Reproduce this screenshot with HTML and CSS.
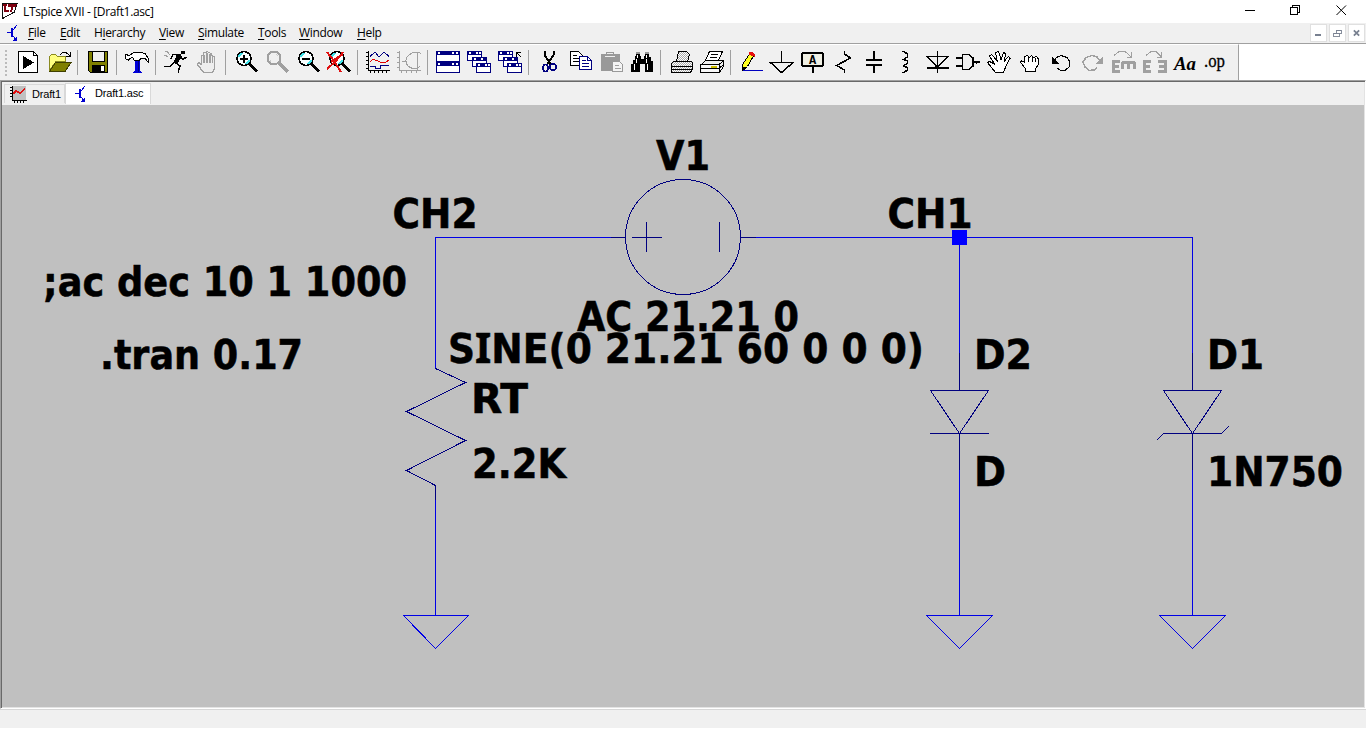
FILE: index.html
```html
<!DOCTYPE html>
<html lang="en">
<head>
<meta charset="utf-8">
<title>LTspice XVII - [Draft1.asc]</title>
<link rel="stylesheet" href="styles.css">
</head>
<body>
<div class="app">
  <header class="titlebar">
    <svg class="logo" width="20" height="23" viewBox="0 0 20 23"><path d="M2.500 3.500V18.500L14.500 12L17 3.500Z" fill="#fff" stroke="#111"/><path d="M3 4H7V6H6V10H9V12H4V6H3ZM8 4H17L16 7H13.500L12 12H10L11.500 7H8Z" fill="#800010"/></svg>
    <span class="title">LTspice XVII - [Draft1.asc]</span>
    <div class="caption">
      <svg width="46" height="23" viewBox="0 0 46 23"><path d="M17 10.500H27" class="k"/></svg>
      <svg width="46" height="23" viewBox="0 0 46 23"><path d="M16.500 7.500H23.500V14.500H16.500ZM18.500 7V5.500H25.500V12.500H24" class="k"/></svg>
      <svg width="46" height="23" viewBox="0 0 46 23"><path d="M16.500 5.500L26 15M26 5.500L16.500 15" class="k smooth"/></svg>
    </div>
  </header>
  <nav class="menubar">
    <svg class="bjt" width="18" height="20" viewBox="0 0 18 20"><use href="#bjt" x="5" y="1"/></svg>
    <span class="m-file"><u>F</u>ile</span><span class="m-edit"><u>E</u>dit</span><span class="m-hier">H<u>i</u>erarchy</span><span class="m-view"><u>V</u>iew</span><span class="m-sim"><u>S</u>imulate</span><span class="m-tools"><u>T</u>ools</span><span class="m-win"><u>W</u>indow</span><span class="m-help"><u>H</u>elp</span>
    <div class="mdi">
      <svg viewBox="0 0 17 17"><path d="M5 11H11" class="g2"/></svg>
      <svg viewBox="0 0 17 17"><path d="M4.500 8.500H10.500V12.500H4.500ZM7.500 8V5.500H12.500V9.500H11M4 8.500H11M7 5.500H13" class="g1"/></svg>
      <svg viewBox="0 0 17 17"><path d="M5.500 5.500L11.500 11.500M11.500 5.500L5.500 11.500" class="g2 smooth"/></svg>
    </div>
  </nav>
  <div class="toolbar">
    <i class="grip"></i>
    <svg viewBox="0 0 31 36"><path d="M6.500 7.500H21.500L25.500 11.500V28.500H6.500Z" class="w"/><path d="M21.500 7.500V11.500H25.500" class="k"/><path d="M11 12L22 18.500L11 25Z"/></svg>
    <svg viewBox="0 0 31 36"><path d="M6.500 26.500V12.500L8.500 10.500H12.500L14.500 12.500H22.500V17.500H13L6.500 26.500Z" fill="#ffff80" stroke="#8a8a20"/><path d="M6.500 27.500L12.500 18.500H28L22 27.500Z" fill="#808000" stroke="#404000"/><path d="M17 10.500L20 8.500H23L27.500 12.500M27.500 8V12.500H23" class="k"/></svg>
    <i class="sep"></i>
    <svg viewBox="0 0 31 36"><path d="M6.500 7.500H25.500V28.500H8.500L6.500 26.500Z" fill="#808000" stroke="#000"/><path d="M10 8H22V17H10Z" fill="#f0f0f0"/><path d="M10.500 8V17.500H22V8" class="k"/><path d="M10 21H23V28H10Z"/><path d="M19 22H22V27H19Z" fill="#fff"/></svg>
    <i class="sep"></i>
    <svg viewBox="0 0 31 36"><path d="M4.500 10.500L8.500 11.500L12.500 8.500H20.500L24.500 10L27.500 15V18.500L24 14.500H20L18 16.500H13.500L11.500 13.500L8.500 14.500L7.500 16.500L4.500 14.500Z" class="w"/><path d="M14 17H19V27L21 28V29H12V28L14 27Z" fill="#0000d8"/><path d="M17.500 17V28" stroke="#000080"/></svg>
    <i class="sep"></i>
    <svg viewBox="0 0 31 36"><path d="M21 7H25V10H21ZM16 10H21L22 13L17 20L13 19L16 13Z"/><path d="M20.500 12L23 15.500L26.500 13M17.500 10.500H13L10.500 15.500M14.500 18L10.500 22.500L4 22.500M16 19L20 22L18 28.500" class="k15"/><path d="M4.500 7.500H7L10 11M4 11.500H6L8.500 13.500" class="g"/></svg>
    <svg viewBox="0 0 31 36"><path d="M12.500 28.500L6.500 20.500L7.500 18.500L10.500 20.500V12L12.500 11.500V9L14.500 8.500L16 7.500L18 8.500L20 9.500L21.500 12L23.500 13V24L21.500 28.500ZM13 11V19M16 8.500V19M19 9.500V19M21.500 12V19" class="hd"/></svg>
    <i class="sep"></i>
    <svg viewBox="0 0 31 36"><use href="#lens"/><path d="M10 14.500H18M14 10.500V18.500" class="k2"/></svg>
    <svg viewBox="0 0 31 36"><circle cx="13" cy="14" r="6.500" fill="none" stroke="#a0a0a0" stroke-width="2"/><path d="M18.500 19.500L27 28" stroke="#a0a0a0" stroke-width="3"/><path d="M15 10L17 12M10 18L9 16" stroke="#ccc"/></svg>
    <svg viewBox="0 0 31 36"><use href="#lens"/><path d="M10 14.500H18" class="k2"/></svg>
    <svg viewBox="0 0 31 36"><use href="#lens"/><path d="M4 8L11 17L18 28M20 8L13 17L4 25M8 18L20 10" fill="none" stroke="#e01010" stroke-width="2"/></svg>
    <i class="sep"></i>
    <svg viewBox="0 0 31 36"><path d="M6.500 7V26.500H28M4 8.500H7M4 12.500H7M4 16.500H7M4 20.500H7M4 24.500H7M8.500 26V29M12.500 26V29M16.500 26V29M20.500 26V29M24.500 26V29" class="k"/><path d="M8 12.500L13 8L17 13L22 8L27 12.500M8 22.500H13V24.500H18V21.500H27" class="n"/><path d="M8 17.500L11 15.500L15 16.500L19 18.500H23L27 16" fill="none" stroke="#e00000"/></svg>
    <svg viewBox="0 0 31 36"><path d="M6.500 7V26.500H28M4 8.500H7M4 13.500H7M4 18.500H7M4 23.500H7M8.500 26V29M13.500 26V29M18.500 26V29M23.500 26V29M24.500 8V26M22 8H26L28 10M24 8C9 9 9 25 24 25M9 17.500H14M24 25L27 22" class="g"/></svg>
    <i class="sep"></i>
    <svg viewBox="0 0 31 36"><path d="M4.500 7.500H27.500V17.500H4.500ZM4.500 18.500H27.500V28.500H4.500Z" class="nw"/><path d="M4 7H28V11H4ZM4 18H28V22H4Z" fill="#000080"/><path d="M6 9H8M20 9H22M24 9H26M6 20H8M20 20H22M24 20H26" stroke="#fff" stroke-width="2"/></svg>
    <svg viewBox="0 0 31 36"><use href="#cascade"/></svg>
    <svg viewBox="0 0 31 36"><use href="#cascade"/><path d="M20 7H27V13H21Z" fill="#f0f0f0"/><path d="M22.500 13V8.500H27M22.500 8.500L27.500 13.500" class="k"/></svg>
    <i class="sep"></i>
    <svg viewBox="0 0 31 36"><path d="M11.500 7V11L18 21M20.500 7V11L14 21" class="k2"/><ellipse cx="12.500" cy="24" rx="2.500" ry="3.500" class="n2"/><ellipse cx="20" cy="23" rx="3" ry="3" class="n2"/></svg>
    <svg viewBox="0 0 31 36"><path d="M6.500 7.500H14.500L18.500 11.500V21.500H6.500Z" class="w"/><path d="M9 11.500H13M9 14.500H15M9 17.500H15" class="k"/><path d="M15.500 12.500H23.500L27.500 16.500V25.500H15.500Z" class="nw"/><path d="M18 16.500H22M18 19.500H25M18 22.500H25M23.500 12.500V16.500H27" class="n"/></svg>
    <svg viewBox="0 0 31 36"><path d="M6 10H11V8H19V10H25V27H6Z" fill="#999"/><path d="M12 9.500H18M10 12.500H20" stroke="#eee"/><path d="M17.500 17.500H24.500L27.500 20.500V27.500H17.500Z" fill="#f4f4f4" stroke="#999"/><path d="M20 21.500H24M20 24.500H26" class="g"/></svg>
    <svg viewBox="0 0 31 36"><path d="M10 9H14V12H15V15H18V12H19V9H23V13H25V17H27V28H19V20H14V28H5V20H7V16H9V12H10Z"/><path d="M10 8.500H14M19 8.500H23" stroke="#999" stroke-width="2"/><path d="M11.500 11V14M10.500 15V19M20.500 11V14M20.500 15V19M8.500 20V26M21.500 20V26" stroke="#fff"/></svg>
    <i class="sep"></i>
    <svg viewBox="0 0 31 36"><path d="M11.500 17.500L13.500 7.500H21.500L24.500 10.500L22.500 17.500Z" class="dz"/><path d="M6.500 19.500L8.500 17.500H26.500L27.500 18.500V24.500L25.500 28.500H6.500Z" class="dz"/><path d="M7 22.500H27M7 25.500H26" class="k"/></svg>
    <svg viewBox="0 0 31 36"><path d="M9.500 16.500L13.500 7.500H26.500L22.500 16.500Z" class="w"/><path d="M15 10.500H22M14 13.500H21M5.500 20.500L9.500 16.500H27.500V22.500L23.500 28.500H4.500V20.500H23L27.500 17M23.500 21V28M5 24.500H23L28 20" class="k"/><path d="M6 21H23V24H6ZM6 25H23V28H6Z" fill="#f8f8f8"/><path d="M15 22.500H21" stroke="#d0c000" stroke-width="2"/></svg>
    <i class="sep"></i>
    <svg viewBox="0 0 31 36"><path d="M14.500 10L18.500 12L12.500 22.500L7.500 26.500V20.500Z" fill="#ffff20" stroke="#000"/><path d="M7 22V27L11 24Z"/><path d="M14 8H17L19 10V12L14 10Z" fill="#f01010" stroke="#e01010"/><path d="M8 26.500H28" stroke="#0000c0"/></svg>
    <svg viewBox="0 0 31 36"><path d="M15.500 7V18M4.500 18.500H27L15.500 28.500Z" class="k15"/></svg>
    <svg viewBox="0 0 31 36"><path d="M15.500 22V29" class="k2"/><rect x="5" y="9" width="21" height="13" rx="2" fill="#f0f0e4" stroke="#000" stroke-width="2"/><text x="15.500" y="20" text-anchor="middle" class="mono">A</text></svg>
    <svg viewBox="0 0 31 36"><path d="M16.500 7V10L22.500 14L8.500 21.500L16.500 26V29" class="k15"/></svg>
    <svg viewBox="0 0 31 36"><path d="M15 7V16M15 21V29" class="k2"/><path d="M7 16H23M7 21H23" class="k2"/></svg>
    <svg viewBox="0 0 31 36"><path d="M12 7.500H14L17.500 10V13L13.500 15.500L17.500 17V19L13.500 22L17.500 23.500V26L14 28.500H12" class="k15"/></svg>
    <svg viewBox="0 0 31 36"><path d="M16.500 7V29M6 12.500H27L16.500 23.500ZM6 24H28" class="k15"/></svg>
    <svg viewBox="0 0 31 36"><path d="M10.500 10.500H17L21 14V22L17 25.500H10.500ZM4 14H10M4 22H10M21 18H28" class="k15"/><path d="M24 17V20" class="k"/></svg>
    <svg viewBox="0 0 31 36"><path d="M12.500 28.500L8.500 23.500L4.500 18.500L6.500 17.500L11.500 20L6.500 12L8.500 10.500L14 16.500L12.500 8.500L15.500 7.500L18 15.500L20.500 8.500L22.500 9.500L21.500 17L25.500 12.500L27 14.500L23 22L20.500 28.500Z" class="w"/></svg>
    <svg viewBox="0 0 31 36"><path d="M11.500 27.500V24.500L6.500 18.500L7.500 16.500L10.500 18.500V12.500L13.500 11.500L15.500 13.500L17.500 11.500L19.500 13.500L22.500 12.500L24.500 15V20.500L21.500 24.500V27.500ZM14 13V18M18 13V18M21.500 14V18" class="w"/></svg>
    <svg viewBox="0 0 31 36"><path d="M8 18L11.500 13.500L16 11.500L22 13.500L25 18L24 23L20 26.500L15 26L12 24" class="k"/><path d="M7 13V20H14Z"/></svg>
    <svg viewBox="0 0 31 36"><path d="M25 18L21 13L16 11.500L10 13.500L7 18L9 23L13 26.500L18 26L21 24" class="g15"/><path d="M26.500 13V20H19.500Z" fill="#a0a0a0"/></svg>
    <svg viewBox="0 0 31 36"><path d="M7 11.500L12 7.500H18L24.500 13M24.500 8V13H20" class="g"/><path d="M13 17.500H6V27.500H13M6 22.500H12M14.500 18H28M15.500 18V25M21.500 18V25M27 18V25" class="ge"/></svg>
    <svg viewBox="0 0 31 36"><path d="M8 11.500L13 7.500H18L23.500 13M23.500 8V13H19" class="g"/><path d="M13 17.500H6V27.500H13M6 22.500H12M20 17.500H27V27.500H20M21 22.500H27" class="ge"/></svg>
    <svg viewBox="0 0 31 36"><text x="5" y="26" class="aa" textLength="22" lengthAdjust="spacingAndGlyphs">Aa</text></svg>
    <svg viewBox="0 0 31 36"><text x="4" y="23" class="op" textLength="21" lengthAdjust="spacingAndGlyphs">.op</text></svg>
  </div>
  <main class="workspace">
    <div class="tabs">
      <div class="tab"><svg width="18" height="20" viewBox="0 0 18 20"><path d="M3 2H17V16H3Z" fill="#c0c0c0"/><path d="M3.500 2V16.500H18M1 3.500H3M1 6.500H3M1 9.500H3M1 12.500H3M5.500 16V19M8.500 16V19M11.500 16V19M14.500 16V19" class="k"/><path d="M4 10L7 7L11 9L16 5" fill="none" stroke="#e01010" stroke-width="1.500"/></svg><span>Draft1</span></div>
      <div class="tab on"><svg width="18" height="20" viewBox="0 0 18 20"><use href="#bjt" x="2" y="1"/></svg><span>Draft1.asc</span></div>
    </div>
    <svg class="sheet" viewBox="2 105 1362 602">
      <g class="wire">
        <path d="M625 237.500H435.500V368"/>
        <path d="M435.500 486V615"/>
        <path d="M741 237.500H1192.500V390"/>
        <path d="M959.500 237V390"/>
        <path d="M959.500 433V615"/>
        <path d="M1192.500 433V615"/>
        <path d="M403.500 615.500H468.500L435.500 648.500Z"/>
        <path d="M926.500 615.500H992.500L959.500 648.500Z"/>
        <path d="M1159.500 615.500H1225.500L1192.500 648.500Z"/>
      </g>
      <g class="part">
        <circle cx="683" cy="237" r="57.500"/>
        <path d="M611 237.500H626M741 237.500H756M632 237.500H662M646.500 222V252M719.500 222V252"/>
        <path d="M435.500 368.500L465.500 382.500L406.500 411.500L465.500 440.500L406.500 470.500L435.500 485.500V500"/>
        <path d="M959.500 353V390M930.500 390.500H988.500L959.500 433.500ZM930 433.500H989M959.500 433V470"/>
        <path d="M1192.500 353V390M1163.500 390.500H1221.500L1192.500 433.500ZM1156.500 440.500L1163.500 433.500H1221.500L1228.500 426.500M1192.500 433V470"/>
      </g>
      <rect x="952" y="230" width="15" height="15" fill="#00f"/>
      <g class="label">
        <text x="656" y="170" textLength="54" lengthAdjust="spacingAndGlyphs">V1</text>
        <text x="392.500" y="228" textLength="85" lengthAdjust="spacingAndGlyphs">CH2</text>
        <text x="887.500" y="228" textLength="85" lengthAdjust="spacingAndGlyphs">CH1</text>
        <text x="43" y="296" textLength="364" lengthAdjust="spacingAndGlyphs">;ac dec 10 1 1000</text>
        <text x="100" y="369" textLength="203" lengthAdjust="spacingAndGlyphs">.tran 0.17</text>
        <text x="577" y="331" textLength="222" lengthAdjust="spacingAndGlyphs">AC 21.21 0</text>
        <text x="448" y="363" textLength="476" lengthAdjust="spacingAndGlyphs">S<tspan class="serifed">I</tspan>NE(0 21.21 60 0 0 0)</text>
        <text x="471" y="413" textLength="57" lengthAdjust="spacingAndGlyphs">RT</text>
        <text x="472" y="478" textLength="94" lengthAdjust="spacingAndGlyphs">2.2K</text>
        <text x="974" y="369" textLength="58" lengthAdjust="spacingAndGlyphs">D2</text>
        <text x="974" y="486" textLength="32" lengthAdjust="spacingAndGlyphs">D</text>
        <text x="1207" y="369" textLength="57" lengthAdjust="spacingAndGlyphs">D1</text>
        <text x="1207" y="486" textLength="136" lengthAdjust="spacingAndGlyphs">1N750</text>
      </g>
    </svg>
  </main>
  <footer class="status"></footer>
</div>
<svg class="defs" width="0" height="0">
  <defs>
    <g id="bjt"><path d="M1 8.500H5M6 7.500L10.500 1.500M6 10.500L9.500 15" fill="none" stroke="#0000d0"/><path d="M5 4H7V13H5ZM11 12V17H7Z" fill="#0000d0"/></g>
    <g id="lens"><circle cx="14" cy="14.500" r="7" fill="#f8ffff" stroke="#000" stroke-width="1.700"/><path d="M8.500 13L12 9M16 20L19.500 16" stroke="#40e0e8" stroke-width="2"/><path d="M19.500 20L27 27.500" stroke="#000" stroke-width="3"/></g>
    <g id="cascade"><path d="M4.500 7.500H18.500V16.500H4.500Z" class="nw"/><path d="M4 7H19V11H4Z" fill="#000080"/><path d="M9.500 13.500H23.500V22.500H9.500Z" class="nw"/><path d="M9 13H24V17H9Z" fill="#000080"/><path d="M13.500 19.500H27.500V28.500H13.500Z" class="nw"/><path d="M13 19H28V23H13Z" fill="#000080"/><path d="M6 9H8M13 9H15M16 9H18M11 15H13M18 15H20M15 21H17M22 21H24M25 21H27" stroke="#fff" stroke-width="1.500"/></g>
    <pattern id="dots" width="2" height="2" patternUnits="userSpaceOnUse"><path d="M0 0H2V2H0Z" fill="#fff"/><path d="M0 0H1V1H0ZM1 1H2V2H1Z" fill="#aaa"/></pattern>
  </defs>
</svg>
</body>
</html>
```
FILE: styles.css
```css
* { box-sizing: border-box; }
body { margin: 0; background: #fff; overflow: hidden; font: 12px "Open Sans", "Noto Sans", sans-serif; color: #000; }
svg { display: block; flex: none; shape-rendering: crispEdges; }
.defs { position: absolute; }
.app { width: 1366px; height: 729px; display: flex; flex-direction: column; }

.titlebar { height: 23px; display: flex; align-items: center; flex: none; }
.title { margin-left: 3px; font-size: 12px; letter-spacing: -0.35px; white-space: nowrap; }
.caption { margin-left: auto; display: flex; }

.menubar { height: 21px; flex: none; display: flex; align-items: center; background: #f0f0f0; border-bottom: 1px solid #a0a0a0; padding-left: 1px; }
.menubar .bjt { margin-right: 9px; }
.menubar span { font-size: 12px; letter-spacing: -0.35px; white-space: nowrap; line-height: 18px; }
.menubar u { text-underline-offset: 2px; }
.m-file { width: 32px; } .m-edit { width: 34px; } .m-hier { width: 65px; } .m-view { width: 39px; }
.m-sim { width: 60px; } .m-tools { width: 41px; } .m-win { width: 58px; } .m-help { width: 30px; }
.mdi { margin-left: auto; display: flex; gap: 2px; padding-right: 1px; }
.mdi svg { width: 17px; height: 18px; background: #fff; border: 1px solid #e0e0e0; }

.toolbar { width: 1239px; height: 36px; flex: none; display: flex; background: #f0f0f0; border-top: 1px solid #fff; border-right: 1px solid #a0a0a0; }
.toolbar svg { width: 31px; height: 36px; margin-top: -1px; }
.grip { width: 12px; padding: 5px 0 0 5px; }
.grip::before { content: ""; display: block; width: 2px; height: 26px; background: repeating-linear-gradient(#bbb 0 2px, transparent 2px 4px); }
.sep { width: 8px; padding: 5px 0 0 3px; }
.sep::before { content: ""; display: block; width: 1px; height: 25px; background: #a0a0a0; }

.k { fill: none; stroke: #000; }
.k2 { fill: none; stroke: #000; stroke-width: 2; }
.k15 { fill: none; stroke: #000; stroke-width: 1.5; }
.w { fill: #fff; stroke: #000; }
.n { fill: none; stroke: #000080; }
.n2 { fill: none; stroke: #000080; stroke-width: 1.7; }
.nw { fill: #fff; stroke: #000080; }
.g { fill: none; stroke: #a0a0a0; }
.g15 { fill: none; stroke: #a0a0a0; stroke-width: 1.5; }
.hd { fill: #eee; stroke: #a0a0a0; stroke-width: 1.3; }
.ge { fill: none; stroke: #a0a0a0; stroke-width: 3; }
.g1 { fill: none; stroke: #788090; }
.g2 { fill: none; stroke: #788090; stroke-width: 2; }
.dz { fill: url(#dots); stroke: #000; }
.smooth { shape-rendering: auto; }
.mono { font: bold 12px "Liberation Mono", monospace; }
.aa { font: italic bold 19px "Liberation Serif", serif; }
.op { font: 19px "Liberation Serif", serif; stroke: #000; stroke-width: .3; }

.workspace { height: 629px; flex: none; border-top: 1px solid #a0a0a0; border-left: 1px solid #a0a0a0; border-right: 1px solid #fff; border-bottom: 1px solid #fff; display: flex; flex-direction: column; background: #f0f0f0; box-shadow: inset 1px 1px #696969, inset -1px -1px #e3e3e3; padding: 1px; }
.tabs { height: 23px; flex: none; display: flex; align-items: flex-start; padding-left: 2px; }
.tab { width: 61px; height: 19px; margin-top: 2px; display: flex; align-items: center; border: 1px solid #d9d9d9; border-bottom: 0; font: 11px "Liberation Sans", Arial, sans-serif; padding-left: 4px; }
.tab svg { margin-right: 5px; }
.tab.on { width: 86px; height: 21px; margin-top: 1px; background: #fff; padding-left: 6px; }
.tab.on span { margin-top: -2px; }
.tab span { white-space: nowrap; letter-spacing: -0.18px; }

.sheet { width: 1362px; height: 602px; background: #c0c0c0; }
.wire { fill: none; stroke: #0000e6; }
.part { fill: none; stroke: #000080; }
.label { font: bold 41px "DejaVu Sans Condensed", "DejaVu Sans", sans-serif; stroke: #000; stroke-width: .5; }
.serifed { font-family: "Noto Sans", sans-serif; }

.status { height: 19px; flex: none; background: #f0f0f0; border-top: 1px solid #d7d7d7; }
```
